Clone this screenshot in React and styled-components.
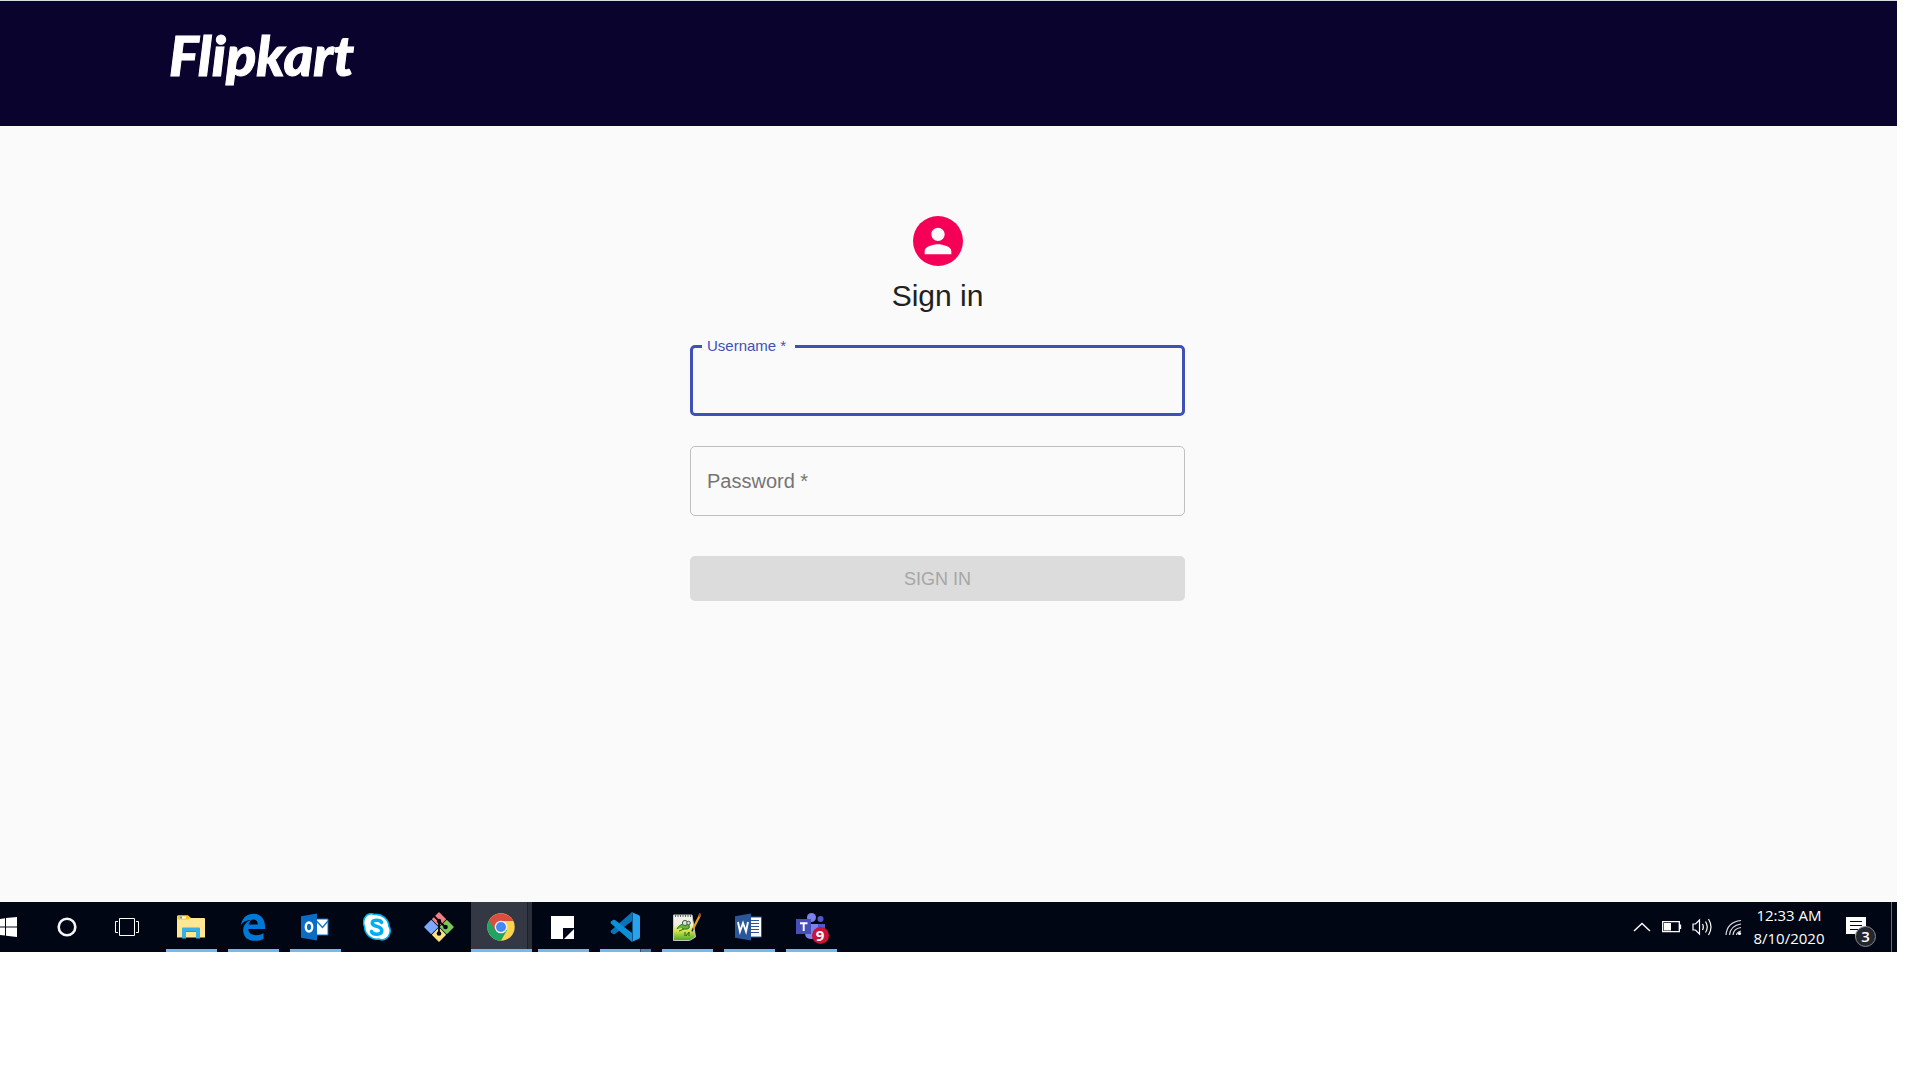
import React from "react";
import styled, { createGlobalStyle } from "styled-components";

const GlobalStyle = createGlobalStyle`
  *, *::before, *::after { box-sizing: border-box; }
  body { margin: 0; background: #ffffff; font-family: "Liberation Sans", Arial, sans-serif; }
  svg { display: block; flex: none; }
`;

const Screen = styled.div`
  margin-right: 23px;
  border-top: 1px solid #d3dcdf;
`;

const Header = styled.header`
  display: flex;
  background: #0a032d;
  padding: 18px 169px 35px;
`;

const Logo = styled.a`
  color: #ffffff;
  font: italic 900 56px/72px Lato, sans-serif;
  -webkit-text-stroke: 1px #ffffff;
  text-decoration: none;
`;

const Main = styled.main`
  background: #fafafa;
  padding: 90px 22px 301px 0;
  display: flex;
  flex-direction: column;
  align-items: center;
`;

const Avatar = styled.div`
  width: 50px;
  height: 50px;
  border-radius: 50%;
  background: #f50057;
  display: grid;
  place-items: center;
`;

const Title = styled.h1`
  margin: 10px 0 29px;
  font-size: 30px;
  line-height: 40px;
  font-weight: 400;
  color: #212121;
`;

const Form = styled.form`
  width: 100%;
  max-width: 495px;
  display: flex;
  flex-direction: column;
`;

const Field = styled.div`
  position: relative;
  margin-bottom: 30px;
`;

const Input = styled.input`
  display: block;
  width: 100%;
  height: ${(p) => (p.$active ? 71 : 70)}px;
  padding: 0 16px;
  border: ${(p) => (p.$active ? "3px solid #3f51b5" : "1px solid #bfbfbf")};
  border-radius: 5px;
  background: transparent;
  font: 20px "Liberation Sans", Arial, sans-serif;
  outline: none;
`;

const Label = styled.label`
  position: absolute;
  pointer-events: none;
  background: #fafafa;
  left: 12px;
  padding: 0 9px 0 5px;
  top: ${(p) => (p.$active ? -9 : 23)}px;
  font-size: ${(p) => (p.$active ? 15 : 20)}px;
  line-height: ${(p) => (p.$active ? 20 : 24)}px;
  color: ${(p) => (p.$active ? "#3f51b5" : "#757575")};
`;

const Submit = styled.button`
  margin-top: 10px;
  height: 45px;
  padding: 2px 0 0;
  border: 0;
  border-radius: 5px;
  background: #dcdcdc;
  color: #a6a6a6;
  font: 18px "Liberation Sans", Arial, sans-serif;
  text-transform: uppercase;
`;

const Taskbar = styled.footer`
  display: flex;
  justify-content: space-between;
  height: 50px;
  background: #000614;
`;

const Group = styled.div`
  display: flex;
  align-items: stretch;
`;

const Apps = styled.div`
  display: flex;
  margin-left: 3px;
`;

const SystemButton = styled.button`
  width: ${(p) => p.$width}px;
  border: 0;
  padding: 0;
  background: transparent;
  display: flex;
  align-items: center;
  justify-content: ${(p) => p.$align || "center"};
`;

const AppButton = styled.button`
  width: 62px;
  border: 0;
  padding: 3px 5px 0 6px;
  background: ${(p) => (p.$active ? "linear-gradient(90deg, transparent 1px, #343845 1px 57px, #1d212c 57px 58px, #2b2f3a 58px)" : "transparent")};
  display: flex;
  flex-direction: column;
  align-items: stretch;
  justify-content: space-between;
`;

const IconSlot = styled.span`
  flex: 1;
  display: grid;
  place-items: center;
  padding-right: 2px;
`;

const Underline = styled.span`
  height: 3px;
  margin: ${(p) => (p.$active ? "0 -5px" : "0")};
  background: ${(p) => (p.$stacked ? "linear-gradient(90deg, #76b9ed calc(100% - 11px), #35516c calc(100% - 11px) calc(100% - 10px), #5487b0 calc(100% - 10px))" : "#76b9ed")};
  visibility: ${(p) => (p.$running ? "visible" : "hidden")};
`;

const Clock = styled.time`
  width: 80px;
  color: #ffffff;
  font: 15px/23px "Open Sans", "Noto Sans", sans-serif;
  text-align: center;
  padding-top: 2px;
`;

const NoticeButton = styled(SystemButton)`
  position: relative;
  padding-left: 17px;
`;

const Count = styled.span`
  position: absolute;
  left: 26px;
  top: 24px;
  width: 21px;
  height: 21px;
  border: 1px solid #858890;
  border-radius: 50%;
  background: #24272e;
  color: #ffffff;
  font: 600 15px/19px "Open Sans", sans-serif;
`;

const ShowDesktop = styled.button`
  width: 6px;
  padding: 0;
  border: 0;
  border-left: 1px solid #686c75;
  background: transparent;
`;

const TeamsIcon = styled.span`
  position: relative;
  display: block;
`;

const TeamsBadge = styled.span`
  position: absolute;
  right: -3px;
  bottom: -2px;
  width: 17px;
  height: 17px;
  border-radius: 50%;
  background: #cc1237;
  color: #ffffff;
  font: 700 15px/17px "Open Sans", sans-serif;
  text-align: center;
`;

const Person = () => (
  <svg width="40" height="40" viewBox="0 0 24 24" fill="#fafafa">
    <path d="M12 12c2.210 0 4-1.790 4-4s-1.790-4-4-4-4 1.790-4 4 1.790 4 4 4zm0 2c-2.670 0-8 1.340-8 4v2h16v-2c0-2.660-5.330-4-8-4z" />
  </svg>
);

const Windows = () => (
  <svg width="17" height="20" viewBox="0 0 17 20" fill="#fff">
    <path d="M0 2 5 1.2V9.4H0zM6 1 17 0V9.4H6zM0 10.4H5V18.6L0 18zM6 10.4H17V20L6 18.8z" />
  </svg>
);
const Cortana = () => (
  <svg width="20" height="20" viewBox="0 0 20 20"><circle cx="10" cy="10" r="8.3" fill="none" stroke="#f5f5f5" strokeWidth="2.6" /></svg>
);
const TaskView = () => (
  <svg width="24" height="18" viewBox="0 0 24 18" fill="none" stroke="#fff">
    <path d="M4.5.5h15v17h-15zM3 3.5H.5v11H3M21 3.5h2.500v11H21" />
  </svg>
);
const Explorer = () => (
  <svg width="28" height="24" viewBox="0 0 28 24">
    <path d="M0 1.500Q0 .5 1 .5h10l3 2.500h13q1 0 1 1V22.500H0z" fill="#ffe692" />
    <path d="M.5 4.500v-3q0-1 1-1H11l2.500 2.500-2.500 1.500z" fill="#fcc726" />
    <path d="M3 1.500h6v2H3z" fill="#fff" /><path d="M3 1.500h2v2H3z" fill="#2da9e1" />
    <path d="M5 23.500V13.500q0-1 1-1h16q1 0 1 1v10h-4v-6.500H9v6.500z" fill="#35b1e3" />
    <path d="M9 17h10v-1H9z" fill="#2397cc" />
  </svg>
);
const Edge = () => (
  <svg width="26" height="28" viewBox="0 0 26 28" fill="#0078d7">
    <path d="M.8 12.700C1.800 5 7 .7 13.500.7 20.500.7 25 6 25 12.700V16H8.300c.3 4.200 3.600 6.200 7.800 6.200 3 0 5.200-.8 7.400-2v5.700c-2.500 1.300-5.300 1.900-8.500 1.900C8 27.800 3.200 23.900 3.200 17.400c0-4.800 2.600-8.400 7.100-10.200C5.500 7 2.500 9.300.8 12.700zM8.600 11.400h9.200c0-3-1.500-4.900-4.300-4.900-2.500 0-4.300 2-4.900 4.900z" />
  </svg>
);
const Outlook = () => (
  <svg width="28" height="28" viewBox="0 0 28 28">
    <path d="M14 6h13v16H14z" fill="#fff" stroke="#0b6fc4" /><path d="m15 7.500 6.500 7L27 8" fill="none" stroke="#1575c6" strokeWidth="1.400" />
    <path d="M0 3.200 16 .5v27L0 24.800z" fill="#0a6cc2" /><ellipse cx="8" cy="14" rx="3.200" ry="4.500" fill="none" stroke="#fff" strokeWidth="2.400" />
  </svg>
);
const Skype = () => (
  <svg width="28" height="28" viewBox="0 0 28 28">
    <path d="M2 4.500C3.500 1 8 0 11.500 1.500 19 .7 25.500 6 25.800 13c2.600 4 1.400 10-2.800 12.600-2.800 1.800-5 1.500-7.500.5C8 27 1.500 21 1.700 14 .2 11 .2 7.500 2 4.500z" fill="#fff" stroke="#00aff0" strokeWidth="1.600" />
    <path d="M18.500 9.300C17.500 7 9.300 5.800 9.300 10c0 4.500 9.500 2.200 9.500 7.500 0 5-9.200 4.500-10.300 1" fill="none" stroke="#00aff0" strokeWidth="3.600" strokeLinecap="round" />
  </svg>
);
const GitIcon = () => (
  <svg width="30" height="30" viewBox="0 0 30 30">
    <g strokeWidth="1.500" strokeLinejoin="round">
      <path d="m15 1 6.200 6.200L15 13.400 8.800 7.200z" fill="#f47f80" stroke="#f47f80" /><path d="m7.200 8.800 6.200 6.200-6.200 6.200L1 15z" fill="#7da8ff" stroke="#7da8ff" />
      <path d="M22.800 8.800 29 15l-6.200 6.200-6.200-6.200z" fill="#79ca58" stroke="#79ca58" /><path d="m15 16.600 6.200 6.200L15 29l-6.200-6.200z" fill="#ffe07c" stroke="#ffe07c" />
    </g>
    <path d="M9.500 3.500 15 9v13M15 9.500l6.500 5.500" fill="none" stroke="#000614" strokeWidth="1.800" />
    <circle cx="15" cy="9" r="2.200" fill="#000614" /><circle cx="15" cy="21.500" r="2.300" fill="#000614" /><circle cx="21.500" cy="15" r="2.300" fill="#000614" />
  </svg>
);
const Chrome = () => (
  <svg width="28" height="28" viewBox="0 0 28 28">
    <circle cx="14" cy="14" r="13.700" fill="#fdd24d" />
    <path d="M14 14 2.200 7A13.700 13.700 0 0 0 14 27.700L20 17z" fill="#1fa463" />
    <path d="M2.200 7A13.700 13.700 0 0 1 26.200 8H14l-6 9z" fill="#dc4c40" />
    <circle cx="14" cy="14" r="6.300" fill="#f3f3f3" /><circle cx="14" cy="14" r="5" fill="#4587f3" />
  </svg>
);
const Sticky = () => (
  <svg width="23" height="23" viewBox="0 0 23 23"><path d="M0 0h23v12H12v11H0z" fill="#fff" /><path d="M23 13v10H13z" fill="#fff" /></svg>
);
const Code = () => (
  <svg width="30" height="30" viewBox="0 0 30 30">
    <path d="M22 0 1 18.500q-1 1 0 2L3 22q1 .7 2 0L22 9z" fill="#0873ba" />
    <path d="M22 30 1 11.500q-1-1 0-2L3 8q1-.7 2 0l17 13z" fill="#0d8fd8" />
    <path d="M21.500 0 28.500 3q1.500.7 1.500 2v20q0 1.300-1.500 2l-7 3q1-.5 1-2V2q0-1.500-1-2z" fill="#25a3ee" />
  </svg>
);
const Notepad = () => (
  <svg width="28" height="28" viewBox="0 0 28 28">
    <defs><linearGradient id="pad" x2="0" y2="1"><stop offset=".35" stopColor="#f1f1e9" /><stop offset=".6" stopColor="#dbe84c" /><stop offset="1" stopColor="#48a92a" /></linearGradient></defs>
    <path d="M.5 2h18.500l3.500 22-6 3.500H.5z" fill="url(#pad)" stroke="#c7c7c2" />
    <path d="M2 3h16" stroke="#666" strokeWidth="2" strokeDasharray="1 1.500" />
    <path d="M4 16c2-4 5-5 8-5 3-1 5 1 4 4-2 2-5 1-7 0M6 18l5-2" fill="#65b839" stroke="#236f20" />
    <circle cx="12" cy="10" r="2.600" fill="#d7e8d3" stroke="#475947" /><circle cx="15.500" cy="10" r="1.800" fill="#d7e8d3" stroke="#475947" />
    <path d="M12 23v-4m1 4 3-4v4" fill="none" stroke="#205f20" />
    <path d="M27.500 1 19.500 17" stroke="#e6a11a" strokeWidth="2.300" /><path d="m27.500.5-1.500 3" stroke="#94462f" strokeWidth="2.500" /><path d="m20 15.500-1 3" stroke="#332b25" strokeWidth="1.400" />
  </svg>
);
const Word = () => (
  <svg width="28" height="28" viewBox="0 0 28 28">
    <path d="M14 4h12.500v20H14z" fill="#fff" stroke="#2b579a" /><path d="M16 7.500h8M16 10.500h8M16 13.500h8M16 16.500h8M16 19.500h8" stroke="#2b579a" strokeWidth="1.200" />
    <path d="M0 3.200 16 .5v27L0 24.800z" fill="#2b579a" /><path d="m3 9 2 9.500L8 10l3 8.500L13 9" fill="none" stroke="#fff" strokeWidth="1.900" />
  </svg>
);
const Teams = () => (
  <TeamsIcon>
    <svg width="30" height="30" viewBox="0 0 30 30">
      <circle cx="15.500" cy="5.500" r="4.500" fill="#7b83eb" /><circle cx="24.500" cy="7" r="3" fill="#5059c9" />
      <path d="M19 12h10v7q0 4-4 4h-6z" fill="#5059c9" /><path d="M9 12h13v9q0 6-6.500 6T9 21z" fill="#7b83eb" />
      <path d="M0 7h15v15H0z" fill="#464eb8" /><path d="M4 11.200h7.500M7.700 11v8" stroke="#fff" strokeWidth="1.900" />
    </svg>
    <TeamsBadge>9</TeamsBadge>
  </TeamsIcon>
);

const Chevron = () => (
  <svg width="18" height="10" viewBox="0 0 18 10"><path d="m1 9 8-7.500L17 9" fill="none" stroke="#fff" strokeWidth="1.400" /></svg>
);
const Battery = () => (
  <svg width="20" height="12" viewBox="0 0 20 12"><path d="M.7.700h16.600v10H.7zM18.500 3.500v4.500" fill="none" stroke="#fff" strokeWidth="1.300" /><path d="M2 2h7v7.500H2z" fill="#fff" /></svg>
);
const Volume = () => (
  <svg width="21" height="20" viewBox="0 0 21 20" fill="none" stroke="#fff" strokeWidth="1.200">
    <path d="M1 7h2.500l4-4v14l-4-4H1z" /><path d="M10.500 7q1.600 3 0 6M13.500 4.500q3.500 5.500 0 11M16.500 2q5 8 0 16" />
  </svg>
);
const Wifi = () => (
  <svg width="17" height="17" viewBox="0 0 17 17" fill="none" stroke="#dedfe1" strokeWidth="1.200">
    <path d="M1 16Q2 3 16 1.500M4.500 16Q5.500 6.500 16 5M8 16q.5-6.500 8-7.500M11.500 16q.3-3 4.500-4" /><circle cx="14.500" cy="14.500" r="1.600" fill="#fff" stroke="none" />
  </svg>
);
const Notice = () => (
  <svg width="20" height="21" viewBox="0 0 20 21"><path d="M0 0h20v17h-7l-4 4v-4H0z" fill="#fff" /><path d="M4 4.500h12M4 8.500h12M4 12.500h8" stroke="#000614" strokeWidth="1.200" /></svg>
);

const apps = [
  { name: "File Explorer", Icon: Explorer, running: true },
  { name: "Microsoft Edge", Icon: Edge, running: true },
  { name: "Outlook", Icon: Outlook, running: true },
  { name: "Skype", Icon: Skype },
  { name: "Git", Icon: GitIcon },
  { name: "Google Chrome", Icon: Chrome, running: true, active: true },
  { name: "Sticky Notes", Icon: Sticky, running: true },
  { name: "Visual Studio Code", Icon: Code, running: true, stacked: true },
  { name: "Notepad++", Icon: Notepad, running: true },
  { name: "Word", Icon: Word, running: true },
  { name: "Teams", Icon: Teams, running: true },
];

export default function App() {
  return (
    <>
      <GlobalStyle />
      <Screen>
        <Header><Logo href="#">Flipkart</Logo></Header>
        <Main>
          <Avatar><Person /></Avatar>
          <Title>Sign in</Title>
          <Form>
            <Field>
              <Input id="username" name="username" required $active />
              <Label htmlFor="username" $active>Username *</Label>
            </Field>
            <Field>
              <Input id="password" name="password" type="password" required />
              <Label htmlFor="password">Password *</Label>
            </Field>
            <Submit type="submit" disabled>Sign in</Submit>
          </Form>
        </Main>
        <Taskbar>
          <Group>
            <SystemButton $width={37} $align="flex-start" aria-label="Start"><Windows /></SystemButton>
            <SystemButton $width={60} aria-label="Cortana"><Cortana /></SystemButton>
            <SystemButton $width={60} aria-label="Task view"><TaskView /></SystemButton>
            <Apps>
              {apps.map(({ name, Icon, running, active, stacked }) => (
                <AppButton key={name} aria-label={name} $active={active}>
                  <IconSlot><Icon /></IconSlot>
                  <Underline $running={running} $active={active} $stacked={stacked} />
                </AppButton>
              ))}
            </Apps>
          </Group>
          <Group>
            <SystemButton $width={30} aria-label="Show hidden icons"><Chevron /></SystemButton>
            <SystemButton $width={30} aria-label="Battery"><Battery /></SystemButton>
            <SystemButton $width={30} aria-label="Volume"><Volume /></SystemButton>
            <SystemButton $width={32} aria-label="Network"><Wifi /></SystemButton>
            <Clock>12:33 AM<br />8/10/2020</Clock>
            <NoticeButton $width={62} $align="flex-start" aria-label="Notifications"><Notice /><Count>3</Count></NoticeButton>
            <ShowDesktop aria-label="Show desktop" />
          </Group>
        </Taskbar>
      </Screen>
    </>
  );
}
